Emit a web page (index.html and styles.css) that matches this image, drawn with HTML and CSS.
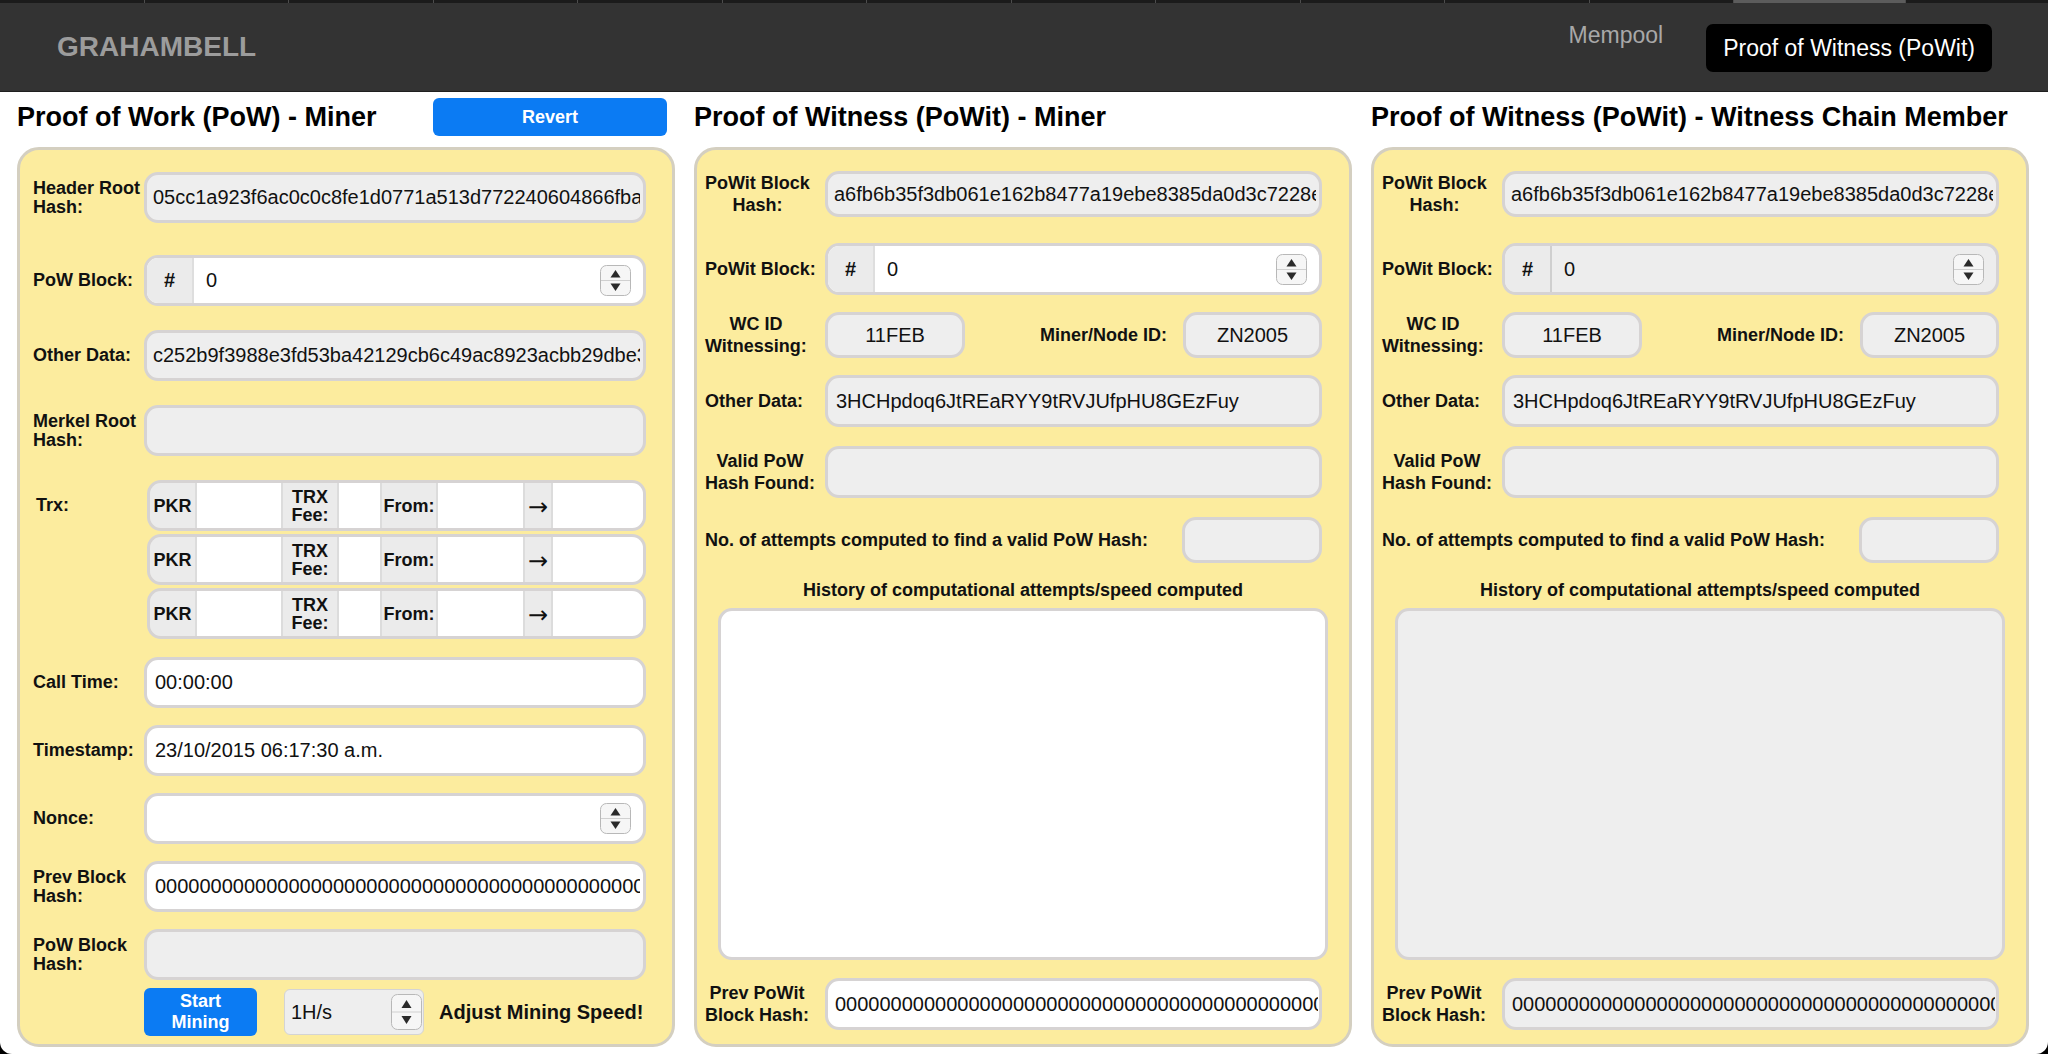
FILE: index.html
```html
<!DOCTYPE html>
<html lang="en">
<head>
<meta charset="utf-8">
<title>Grahambell – Proof of Witness (PoWit)</title>
<link rel="stylesheet" href="styles.css">
</head>
<body>
<div class="app">
  <header class="topbar">
    <div class="tabstrip">
      <span class="tabstrip__tab"></span><span class="tabstrip__tab"></span><span class="tabstrip__tab"></span><span class="tabstrip__tab"></span>
      <span class="tabstrip__tab"></span><span class="tabstrip__tab"></span><span class="tabstrip__tab"></span><span class="tabstrip__tab"></span>
      <span class="tabstrip__tab"></span><span class="tabstrip__tab"></span><span class="tabstrip__tab"></span><span class="tabstrip__tab"></span>
      <span class="tabstrip__tab tabstrip__tab--current"></span><span class="tabstrip__tab tabstrip__tab--rest"></span>
    </div>
    <nav class="navbar">
      <a class="brand" href="#">GRAHAMBELL</a>
      <div class="nav-links">
        <a class="nav-link nav-link--plain" href="#">Mempool</a>
        <a class="nav-link nav-link--active" href="#">Proof of Witness (PoWit)</a>
      </div>
    </nav>
  </header>

  <main class="columns">
    <!-- Proof of Work miner -->
    <section class="column">
      <div class="column__head">
        <h2 class="column__title">Proof of Work (PoW) - Miner</h2>
        <button class="btn btn--revert" type="button">Revert</button>
      </div>
      <div class="panel panel--pow">
        <div class="stack stack--top">
          <div class="row row--first">
            <label class="label">Header Root<br>Hash:</label>
            <input class="field field--readonly field--hash" readonly value="05cc1a923f6ac0c0c8fe1d0771a513d772240604866fba7e3c51b9d2f0a84c6e">
          </div>
          <div class="row">
            <label class="label">PoW Block:</label>
            <div class="field-group">
              <span class="field-group__addon">#</span>
              <input class="field-group__input" value="0">
              <svg class="spinner" width="31" height="31" viewBox="0 0 31 31"><rect x="0.5" y="0.5" width="30" height="30" rx="6" fill="#f6f6f6" stroke="#b8b8b8"/><line x1="1" y1="15.5" x2="30" y2="15.5" stroke="#d0d0d0"/><path d="M15.5 5 L20.5 12.5 H10.5 Z" fill="#2a2a2a"/><path d="M15.5 26 L20.5 18.5 H10.5 Z" fill="#2a2a2a"/></svg>
            </div>
          </div>
          <div class="row">
            <label class="label">Other Data:</label>
            <input class="field field--readonly field--hash" readonly value="c252b9f3988e3fd53ba42129cb6c49ac8923acbb29dbe3f1a07c4d85e26b9a10">
          </div>
          <div class="row">
            <label class="label">Merkel Root<br>Hash:</label>
            <input class="field field--readonly" readonly value="">
          </div>
          <div class="row row--trx">
            <label class="label label--trx">Trx:</label>
            <div class="trx-list">
              <div class="trx">
                <span class="trx__addon">PKR</span><input class="trx__input"><span class="trx__addon">TRX<br>Fee:</span><input class="trx__input"><span class="trx__addon">From:</span><input class="trx__input"><span class="trx__addon trx__addon--arrow">→</span><input class="trx__input">
              </div>
              <div class="trx">
                <span class="trx__addon">PKR</span><input class="trx__input"><span class="trx__addon">TRX<br>Fee:</span><input class="trx__input"><span class="trx__addon">From:</span><input class="trx__input"><span class="trx__addon trx__addon--arrow">→</span><input class="trx__input">
              </div>
              <div class="trx">
                <span class="trx__addon">PKR</span><input class="trx__input"><span class="trx__addon">TRX<br>Fee:</span><input class="trx__input"><span class="trx__addon">From:</span><input class="trx__input"><span class="trx__addon trx__addon--arrow">→</span><input class="trx__input">
              </div>
            </div>
          </div>
        </div>

        <div class="stack stack--bottom">
          <div class="row">
            <label class="label">Call Time:</label>
            <input class="field" value="00:00:00">
          </div>
          <div class="row">
            <label class="label">Timestamp:</label>
            <input class="field" value="23/10/2015 06:17:30 a.m.">
          </div>
          <div class="row">
            <label class="label">Nonce:</label>
            <div class="field-group">
              <input class="field-group__input field-group__input--solo" value="">
              <svg class="spinner" width="31" height="31" viewBox="0 0 31 31"><rect x="0.5" y="0.5" width="30" height="30" rx="6" fill="#f6f6f6" stroke="#b8b8b8"/><line x1="1" y1="15.5" x2="30" y2="15.5" stroke="#d0d0d0"/><path d="M15.5 5 L20.5 12.5 H10.5 Z" fill="#2a2a2a"/><path d="M15.5 26 L20.5 18.5 H10.5 Z" fill="#2a2a2a"/></svg>
            </div>
          </div>
          <div class="row">
            <label class="label">Prev Block<br>Hash:</label>
            <input class="field" value="0000000000000000000000000000000000000000000000000000000000000000">
          </div>
          <div class="row">
            <label class="label">PoW Block<br>Hash:</label>
            <input class="field field--readonly" readonly value="">
          </div>
        </div>

        <div class="row row--actions">
          <span></span>
          <div class="actions">
            <button class="btn btn--mine" type="button">Start<br>Mining</button>
            <div class="speed">
              <span class="speed__value">1H/s</span>
              <svg class="spinner spinner--tall" width="31" height="36" viewBox="0 0 31 36"><rect x="0.5" y="0.5" width="30" height="35" rx="6" fill="#f6f6f6" stroke="#b8b8b8"/><line x1="1" y1="18" x2="30" y2="18" stroke="#d0d0d0"/><path d="M15.5 6 L20.5 14 H10.5 Z" fill="#2a2a2a"/><path d="M15.5 30 L20.5 22 H10.5 Z" fill="#2a2a2a"/></svg>
            </div>
            <span class="actions__hint">Adjust Mining Speed!</span>
          </div>
        </div>
      </div>
    </section>

    <!-- Proof of Witness miner -->
    <section class="column">
      <div class="column__head">
        <h2 class="column__title">Proof of Witness (PoWit) - Miner</h2>
      </div>
      <div class="panel panel--witness">
        <div class="row">
          <label class="label">PoWit Block<br>Hash:</label>
          <input class="field field--readonly field--short field--hash" readonly value="a6fb6b35f3db061e162b8477a19ebe8385da0d3c7228ea4f90b1c3d57e2a86b4">
        </div>
        <div class="row row--block">
          <label class="label">PoWit Block:</label>
          <div class="field-group">
            <span class="field-group__addon">#</span>
            <input class="field-group__input" value="0">
            <svg class="spinner" width="31" height="31" viewBox="0 0 31 31"><rect x="0.5" y="0.5" width="30" height="30" rx="6" fill="#f6f6f6" stroke="#b8b8b8"/><line x1="1" y1="15.5" x2="30" y2="15.5" stroke="#d0d0d0"/><path d="M15.5 5 L20.5 12.5 H10.5 Z" fill="#2a2a2a"/><path d="M15.5 26 L20.5 18.5 H10.5 Z" fill="#2a2a2a"/></svg>
          </div>
        </div>
        <div class="row row--ids">
          <label class="label">WC ID<br>Witnessing:</label>
          <input class="field field--readonly field--short field--center" readonly value="11FEB">
          <label class="label label--right">Miner/Node ID:</label>
          <input class="field field--readonly field--short field--center" readonly value="ZN2005">
        </div>
        <div class="row row--other">
          <label class="label">Other Data:</label>
          <input class="field field--readonly" readonly value="3HCHpdoq6JtREaRYY9tRVJUfpHU8GEzFuy">
        </div>
        <div class="row row--valid">
          <label class="label">Valid PoW<br>Hash Found:</label>
          <input class="field field--readonly" readonly value="">
        </div>
        <div class="row row--attempts">
          <label class="label">No. of attempts computed to find a valid PoW Hash:</label>
          <input class="field field--readonly field--short" readonly value="">
        </div>
        <div class="history">
          <div class="history__title">History of computational attempts/speed computed</div>
          <textarea class="history__log" readonly></textarea>
        </div>
        <div class="row row--prev">
          <label class="label">Prev PoWit<br>Block Hash:</label>
          <input class="field field--prev" value="0000000000000000000000000000000000000000000000000000000000000000">
        </div>
      </div>
    </section>

    <!-- Proof of Witness chain member -->
    <section class="column">
      <div class="column__head">
        <h2 class="column__title">Proof of Witness (PoWit) - Witness Chain Member</h2>
      </div>
      <div class="panel panel--witness">
        <div class="row">
          <label class="label">PoWit Block<br>Hash:</label>
          <input class="field field--readonly field--short field--hash" readonly value="a6fb6b35f3db061e162b8477a19ebe8385da0d3c7228ea4f90b1c3d57e2a86b4">
        </div>
        <div class="row row--block">
          <label class="label">PoWit Block:</label>
          <div class="field-group field-group--readonly">
            <span class="field-group__addon">#</span>
            <input class="field-group__input" readonly value="0">
            <svg class="spinner" width="31" height="31" viewBox="0 0 31 31"><rect x="0.5" y="0.5" width="30" height="30" rx="6" fill="#f6f6f6" stroke="#b8b8b8"/><line x1="1" y1="15.5" x2="30" y2="15.5" stroke="#d0d0d0"/><path d="M15.5 5 L20.5 12.5 H10.5 Z" fill="#2a2a2a"/><path d="M15.5 26 L20.5 18.5 H10.5 Z" fill="#2a2a2a"/></svg>
          </div>
        </div>
        <div class="row row--ids">
          <label class="label">WC ID<br>Witnessing:</label>
          <input class="field field--readonly field--short field--center" readonly value="11FEB">
          <label class="label label--right">Miner/Node ID:</label>
          <input class="field field--readonly field--short field--center" readonly value="ZN2005">
        </div>
        <div class="row row--other">
          <label class="label">Other Data:</label>
          <input class="field field--readonly" readonly value="3HCHpdoq6JtREaRYY9tRVJUfpHU8GEzFuy">
        </div>
        <div class="row row--valid">
          <label class="label">Valid PoW<br>Hash Found:</label>
          <input class="field field--readonly" readonly value="">
        </div>
        <div class="row row--attempts">
          <label class="label">No. of attempts computed to find a valid PoW Hash:</label>
          <input class="field field--readonly field--short" readonly value="">
        </div>
        <div class="history">
          <div class="history__title">History of computational attempts/speed computed</div>
          <textarea class="history__log history__log--readonly" readonly></textarea>
        </div>
        <div class="row row--prev">
          <label class="label">Prev PoWit<br>Block Hash:</label>
          <input class="field field--readonly field--prev" readonly value="0000000000000000000000000000000000000000000000000000000000000000">
        </div>
      </div>
    </section>
  </main>
</div>
</body>
</html>
```

FILE: styles.css
```css
* {
  box-sizing: border-box;
}

html,
body {
  margin: 0;
  height: 100%;
}

body {
  background: #000;
  font-family: "Liberation Sans", Arial, Helvetica, sans-serif;
  color: #111;
}

.app {
  height: 1054px;
  background: #fff;
  border-radius: 0 0 12px 12px;
  overflow: hidden;
}

/* ---------- top bar ---------- */
.topbar {
  background: #333;
  border-bottom: 1px solid #1f1f1f;
}

.tabstrip {
  display: flex;
  height: 3px;
  background: #1b1b1b;
}

.tabstrip__tab {
  width: 144.5px;
  flex: none;
  border-right: 1px solid #4d4d4d;
}

.tabstrip__tab--current {
  width: 172px;
  background: #5c5c5c;
}

.tabstrip__tab--rest {
  flex: 1;
  border-right: 0;
}

.navbar {
  height: 88px;
  display: flex;
  align-items: center;
  justify-content: space-between;
  padding: 0 56px 0 57px;
}

.brand {
  font-size: 28px;
  font-weight: 700;
  color: #9c9c9c;
  text-decoration: none;
}

.nav-links {
  display: flex;
  align-items: center;
  gap: 43px;
}

.nav-link {
  font-size: 23px;
  text-decoration: none;
}

.nav-link--plain {
  color: #a8a8a8;
  margin-bottom: 24px;
}

.nav-link--active {
  color: #fff;
  background: #000;
  height: 48px;
  line-height: 48px;
  padding: 0 17px;
  border-radius: 7px;
  margin-top: 2px;
}

/* ---------- columns ---------- */
.columns {
  display: grid;
  grid-template-columns: repeat(3, 658px);
  column-gap: 19px;
  padding: 6px 0 0 17px;
}

.column {
  display: flex;
  flex-direction: column;
}

.column__head {
  height: 38px;
  display: flex;
  align-items: center;
  margin-bottom: 11px;
}

.column__title {
  margin: 0;
  font-size: 27px;
  font-weight: 700;
  color: #000;
  white-space: nowrap;
}

.btn {
  border: 0;
  font-family: inherit;
  font-weight: 700;
  color: #fff;
  background: #0b7bf3;
  cursor: pointer;
}

.btn--revert {
  margin-left: auto;
  margin-right: 8px;
  width: 234px;
  height: 38px;
  border-radius: 6px;
  font-size: 18px;
}

/* ---------- panels ---------- */
.panel {
  flex: 1;
  display: flex;
  flex-direction: column;
  background: #fcec9e;
  border: 3px solid #d4cfc0;
  border-radius: 22px;
}

.panel--pow {
  padding: 22px 26px 6px 13px;
}

.panel--witness {
  padding: 21px 27px 14px 8px;
}

.stack {
  display: flex;
  flex-direction: column;
}

.stack--top {
  gap: 24px;
}

.stack--bottom {
  gap: 17px;
  margin-top: 18px;
}

.row {
  display: grid;
  align-items: center;
}

.panel--pow .row {
  grid-template-columns: 111px 1fr;
}

.panel--pow .row--first {
  margin-bottom: 8px;
}

.panel--pow .row--trx {
  align-items: start;
}

.panel--pow .row--actions {
  margin-top: 8px;
}

.panel--witness .row {
  grid-template-columns: 120px 1fr;
}

.panel--witness .row--block {
  margin-top: 26px;
}

.panel--witness .row--ids {
  grid-template-columns: 120px 140px 1fr 139px;
  margin-top: 17px;
}

.panel--witness .row--other {
  margin-top: 17px;
}

.panel--witness .row--valid,
.panel--witness .row--attempts {
  margin-top: 19px;
}

.panel--witness .row--attempts {
  grid-template-columns: 1fr 140px;
}

.panel--witness .row--prev {
  margin-top: 18px;
}

.label {
  font-size: 18px;
  font-weight: 700;
  line-height: 19px;
  color: #111;
}

.panel--witness .label {
  line-height: 22px;
  text-align: center;
  justify-self: start;
}

.panel--witness .label--right {
  justify-self: end;
  margin-right: 16px;
}

.label--trx {
  line-height: 51px;
  padding-left: 3px;
}

/* ---------- inputs ---------- */
.field {
  width: 100%;
  height: 51px;
  border: 3px solid #d6d3d3;
  border-radius: 14px;
  background: #fff;
  font-family: inherit;
  font-size: 20px;
  color: #111;
  padding: 0 3px 0 8px;
  outline: none;
}

.field--hash {
  padding-left: 6px;
}

.panel--witness .field {
  height: 52px;
}

.panel--witness .field--short {
  height: 46px;
}

.field--readonly {
  background: #eeeeee;
}

.field--center {
  text-align: center;
  padding: 0 4px;
}

.field--prev {
  padding-left: 7px;
  padding-right: 1px;
}

.field-group {
  display: flex;
  align-items: center;
  height: 51px;
  border: 3px solid #d6d3d3;
  border-radius: 14px;
  background: #fff;
  overflow: hidden;
}

.panel--witness .field-group {
  height: 52px;
}

.field-group__addon {
  flex: none;
  align-self: stretch;
  width: 47px;
  display: flex;
  align-items: center;
  justify-content: center;
  background: #ebebeb;
  border-right: 2px solid #dedede;
  font-size: 20px;
  font-weight: 700;
}

.field-group__input {
  flex: 1;
  min-width: 0;
  height: 100%;
  border: 0;
  background: transparent;
  font-family: inherit;
  font-size: 20px;
  color: #111;
  padding: 0 0 0 12px;
  outline: none;
}

.field-group__input--solo {
  padding-left: 8px;
}

.field-group--readonly {
  background: #ededed;
}

.field-group--readonly .field-group__addon {
  border-right-color: #cfcfcf;
}

.spinner {
  flex: none;
  display: block;
  margin-right: 12px;
}

/* ---------- transactions ---------- */
.trx-list {
  display: flex;
  flex-direction: column;
  gap: 3px;
  margin-left: 3px;
}

.trx {
  display: grid;
  grid-template-columns: 45px 84px 54px 41px 54px 85px 26px 1fr;
  column-gap: 2px;
  height: 51px;
  border: 3px solid #d6d3d3;
  border-radius: 14px;
  background: #dcdcdc;
  overflow: hidden;
}

.trx__addon {
  display: flex;
  align-items: center;
  justify-content: center;
  text-align: center;
  background: #ebebeb;
  font-size: 18px;
  font-weight: 700;
  line-height: 18px;
}

.trx__addon--arrow {
  font-family: "DejaVu Sans", "Liberation Sans", sans-serif;
  font-weight: 400;
  font-size: 24px;
  padding-top: 3px;
}

.trx__input {
  width: 100%;
  min-width: 0;
  height: 100%;
  border: 0;
  background: #fff;
  font-family: inherit;
  font-size: 20px;
  padding: 0 6px;
  outline: none;
}

/* ---------- mining actions ---------- */
.actions {
  display: flex;
  align-items: center;
}

.btn--mine {
  width: 113px;
  height: 48px;
  border-radius: 6px;
  font-size: 18px;
  line-height: 21px;
}

.speed {
  margin-left: 27px;
  width: 140px;
  height: 46px;
  display: flex;
  align-items: center;
  justify-content: space-between;
  padding: 0 0 0 6px;
  background: #eeeeee;
  border: 1px solid #d4d4d4;
  border-radius: 6px;
  font-size: 20px;
}

.speed .spinner {
  margin-right: 1px;
}

.actions__hint {
  margin-left: 15px;
  font-size: 20px;
  font-weight: 700;
  white-space: nowrap;
}

/* ---------- history ---------- */
.history {
  display: flex;
  flex-direction: column;
  margin: 16px -6px 0 13px;
}

.history__title {
  font-size: 18px;
  font-weight: 700;
  line-height: 22px;
  text-align: center;
}

.history__log {
  margin-top: 7px;
  height: 352px;
  border: 3px solid #d6d3d3;
  border-radius: 14px;
  background: #fff;
  resize: none;
  outline: none;
}

.history__log--readonly {
  background: #eeeeee;
}
```
